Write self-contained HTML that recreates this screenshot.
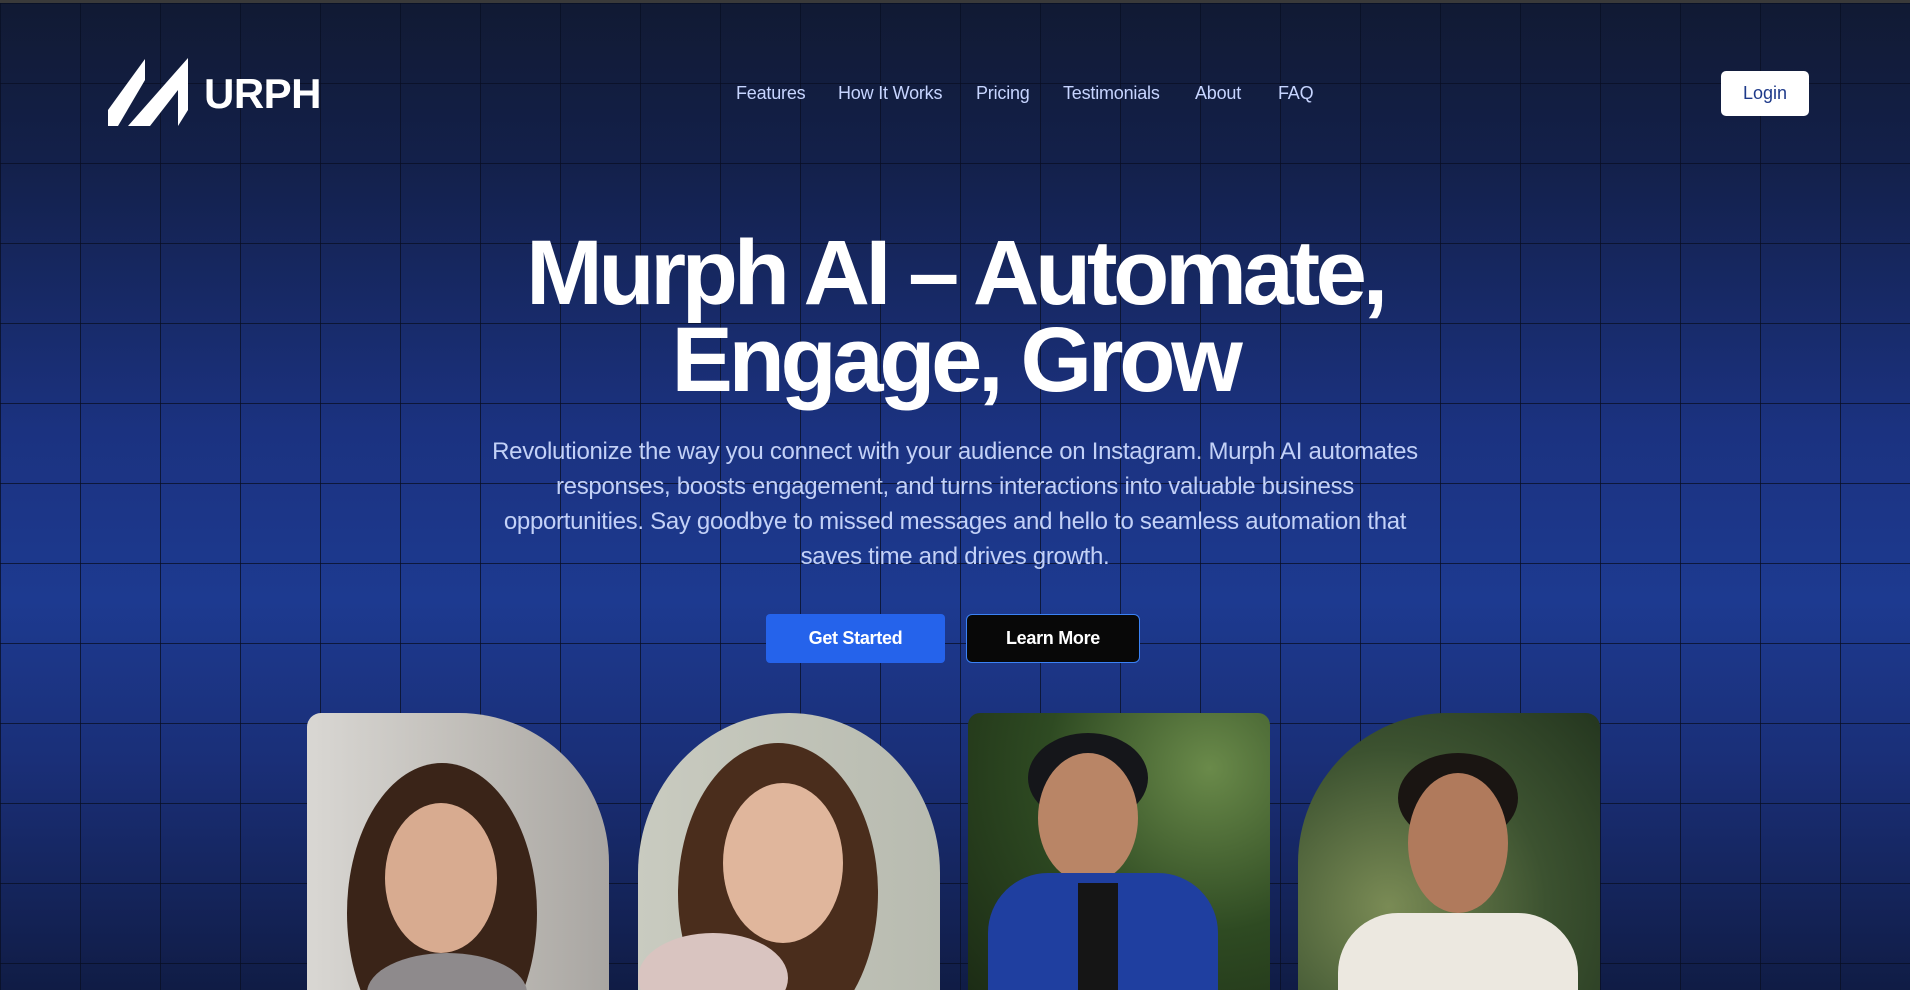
<!DOCTYPE html>
<html><head><meta charset="utf-8"><style>
*{margin:0;padding:0;box-sizing:border-box}
html,body{width:1910px;height:990px;overflow:hidden}
body{font-family:"Liberation Sans",sans-serif;position:relative;
background:linear-gradient(180deg,#3a3a3a 0,#3a3a3a 3px,#111a33 3px,#13204a 160px,#1b3280 430px,#1d3a90 600px,#1a2f78 760px,#101c45 990px);}
.grid{position:absolute;left:0;top:3px;width:1910px;height:987px;
background-image:linear-gradient(90deg,rgba(8,14,35,.75) 1px,transparent 1px),linear-gradient(180deg,rgba(8,14,35,.75) 1px,transparent 1px);
background-size:80px 80px;background-position:0 0,0 0}
.logo{position:absolute;left:108px;top:58px}
.brand{position:absolute;left:204px;top:70px;color:#fff;font-size:42px;font-weight:bold;letter-spacing:-.5px}
nav a{position:absolute;top:83px;color:#c7d5ff;font-size:18px;text-decoration:none;letter-spacing:-.2px}
.login{position:absolute;left:1721px;top:71px;width:88px;height:45px;background:#fff;border-radius:5px;color:#1e3a8a;font-size:18px;text-align:center;line-height:45px}
h1{position:absolute;left:0;width:1910px;top:230px;text-align:center;color:#fff;font-size:92px;line-height:87px;letter-spacing:-4.3px;font-weight:bold}
p{position:absolute;left:486px;width:938px;top:434px;text-align:center;color:#c3d1f7;font-size:24px;line-height:35px;letter-spacing:-.3px}
.btn{position:absolute;top:614px;height:49px;color:#fff;font-size:18px;font-weight:bold;text-align:center;line-height:49px;letter-spacing:-.3px}
.b1{left:766px;width:179px;background:#2563eb;border-radius:4px}
.b2{left:966px;width:174px;background:#080808;border:1px solid #3b82f6;border-radius:6px;line-height:47px}
.card{position:absolute;top:713px;height:277px;width:302px;overflow:hidden}
.c1{left:307px;border-radius:14px 150px 0 0;background:linear-gradient(90deg,#d9d7d3,#bdbab5 60%,#a9a6a2)}
.c2{left:638px;border-radius:151px 151px 0 0/160px 160px 0 0;background:linear-gradient(90deg,#c9cbc0,#b8bbb0)}
.c3{left:968px;border-radius:12px 12px 0 0;background:radial-gradient(circle at 80% 20%,#6a8a4a,#2e4a22 50%,#1c2c15)}
.c4{left:1298px;border-radius:150px 14px 0 0;background:radial-gradient(circle at 30% 70%,#7a8b55,#3c5230 55%,#24361f)}
.s{position:absolute;border-radius:50%}
</style></head><body>
<div class="grid"></div>
<svg class="logo" width="82" height="68" viewBox="0 0 82 68"><polygon points="0,52 37,1 37,22 10,68 0,68" fill="#fff"/><polygon points="20,68 80,0 80,52 70,68 70,32 42,68" fill="#fff"/></svg>
<div class="brand">URPH</div>
<nav><a style="left:736px">Features</a><a style="left:838px">How It Works</a><a style="left:976px">Pricing</a><a style="left:1063px">Testimonials</a><a style="left:1195px">About</a><a style="left:1278px">FAQ</a></nav>
<div class="login">Login</div>
<h1>Murph AI – Automate,<br>Engage, Grow</h1>
<p>Revolutionize the way you connect with your audience on Instagram. Murph AI automates responses, boosts engagement, and turns interactions into valuable business opportunities. Say goodbye to missed messages and hello to seamless automation that saves time and drives growth.</p>
<div class="btn b1">Get Started</div>
<div class="btn b2">Learn More</div>
<div class="card c1"><div class="s" style="left:40px;top:50px;width:190px;height:300px;background:#3a2418"></div><div class="s" style="left:78px;top:90px;width:112px;height:150px;background:#d8ab90"></div><div class="s" style="left:60px;top:240px;width:160px;height:80px;background:#8e8a8c"></div></div>
<div class="card c2"><div class="s" style="left:40px;top:30px;width:200px;height:300px;background:#4a2d1c"></div><div class="s" style="left:85px;top:70px;width:120px;height:160px;background:#e0b69c"></div><div class="s" style="left:0px;top:220px;width:150px;height:90px;background:#d9c4c0"></div></div>
<div class="card c3"><div class="s" style="left:60px;top:20px;width:120px;height:90px;background:#15161a"></div><div class="s" style="left:70px;top:40px;width:100px;height:130px;background:#b98566"></div><div style="position:absolute;left:20px;top:160px;width:230px;height:140px;background:#1f3fa0;border-radius:60px 60px 0 0"></div><div style="position:absolute;left:110px;top:170px;width:40px;height:120px;background:#151515"></div></div>
<div class="card c4"><div class="s" style="left:100px;top:40px;width:120px;height:90px;background:#1a1512"></div><div class="s" style="left:110px;top:60px;width:100px;height:140px;background:#b07a5c"></div><div style="position:absolute;left:40px;top:200px;width:240px;height:100px;background:#ece8e0;border-radius:60px 60px 0 0"></div></div>
</body></html>
